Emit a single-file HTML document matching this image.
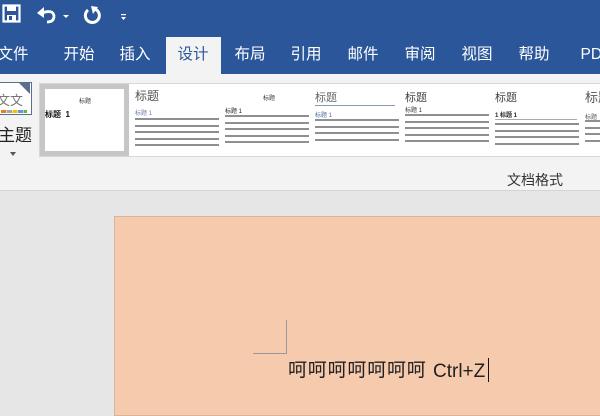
<!DOCTYPE html>
<html><head><meta charset="utf-8"><style>
*{margin:0;padding:0;box-sizing:border-box}
body{width:600px;height:400px;overflow:hidden;position:relative;background:#e6e6e6;font-family:"Liberation Sans","Noto Sans CJK SC",sans-serif}
.a{position:absolute}
.top{left:0;top:0;width:600px;height:74px;background:#2b579a}
.tab{position:absolute;top:37px;height:37px;line-height:36px;color:#fff;font-size:15.5px;text-align:center}
.rib{left:0;top:74px;width:600px;height:117px;background:#f3f3f3;border-bottom:1px solid #d4d4d4}
.gal{left:39px;top:83px;width:570px;height:74px;background:#fff;border:1px solid #d6d6d6}
.it{position:absolute;top:0;width:90px;height:72px;font-size:6px;color:#444;overflow:hidden}
.tx{position:absolute;left:0;width:84px;height:60px}
.ln{height:2px;background:#6a6a6a;margin:0 0 4.5px 0;width:84px;opacity:.75}
</style></head><body>
<div class="a top"></div>
<svg class="a" style="left:2px;top:4px" width="130" height="22" viewBox="0 0 130 22">
 <rect x="1.5" y="1.5" width="16" height="16" fill="none" stroke="#fff" stroke-width="2.2"/>
 <rect x="5" y="2" width="9" height="5" fill="#fff"/>
 <rect x="5" y="11" width="9" height="6" fill="#fff"/>
 <rect x="7" y="12" width="3" height="4" fill="#2b579a"/>
 <path d="M40 9 Q51 5 52 12 Q52 18 45 18" fill="none" stroke="#fff" stroke-width="2.8"/>
 <path d="M35 9 L42 3 L42 14 Z" fill="#fff"/>
 <path d="M61 11 l3 3 3-3z" fill="#fff"/>
 <path d="M86 6 A7 7 0 1 0 93 5" fill="none" stroke="#fff" stroke-width="3"/>
 <path d="M89 2 L96 3 L91 10 Z" fill="#fff"/>
 <rect x="119" y="10" width="5" height="1.2" fill="#fff"/>
 <path d="M119 13 l2.5 3 2.5-3z" fill="#fff"/>
</svg>
<div class="tab" style="left:166px;width:55px;background:#f3f3f3;color:#2b579a"></div>
<div class="tab" style="left:-7px;width:40px">文件</div>
<div class="tab" style="left:59px;width:40px">开始</div>
<div class="tab" style="left:115px;width:40px">插入</div>
<div class="tab" style="left:173px;width:40px;color:#2b579a">设计</div>
<div class="tab" style="left:230px;width:40px">布局</div>
<div class="tab" style="left:286px;width:40px">引用</div>
<div class="tab" style="left:343px;width:40px">邮件</div>
<div class="tab" style="left:400px;width:40px">审阅</div>
<div class="tab" style="left:457px;width:40px">视图</div>
<div class="tab" style="left:514px;width:40px">帮助</div>
<div class="tab" style="left:576px;width:40px">PDF</div>
<div class="a rib"></div>
<div class="a" style="left:-2px;top:82px;width:34px;height:33px;border:1px solid #5a6f8f;background:#fff"></div>
<div class="a" style="left:-3px;top:90px;font-size:13px;color:#777;font-family:'Noto Sans CJK SC',sans-serif;white-space:nowrap">文文</div>
<div class="a" style="left:19px;top:83px;width:0;height:0;border-left:11px solid transparent;border-top:11px solid #5a6f8f"></div>
<div class="a" style="left:1px;top:110px;width:26px;height:3px;background:linear-gradient(90deg,#d9822b 0 20%,#fff 20% 22%,#a5a5a5 22% 42%,#fff 42% 44%,#f4c000 44% 64%,#fff 64% 66%,#5b9bd5 66% 86%,#fff 86% 88%,#70ad47 88%)"></div>
<div class="a" style="left:-2px;top:121px;font-size:17px;color:#222">主题</div>
<div class="a" style="left:10px;top:152px;border-left:3.5px solid transparent;border-right:3.5px solid transparent;border-top:4px solid #555"></div>
<div class="a gal">
 <div class="it" style="left:0;width:89px;height:72px;border:5px solid #c6c6c6">
  <div class="a" style="left:34px;top:7px;font-size:6px;color:#333">标题</div>
  <div class="a" style="left:0;top:20px;font-size:8px;font-weight:bold;color:#111">标题&nbsp; 1</div>
 </div>
 <div class="it" style="left:95px">
  <div class="a" style="left:0;top:3px;font-size:12px;color:#555">标题</div>
  <div class="a" style="left:0;top:24px;font-size:6px;color:#6a7fa8">标题 1</div>
  <div class="tx" style="top:34px"><div class="ln"></div><div class="ln"></div><div class="ln"></div><div class="ln"></div><div class="ln"></div></div>
 </div>
 <div class="it" style="left:185px">
  <div class="a" style="left:38px;top:9px;font-size:6px;color:#333">标题</div>
  <div class="a" style="left:0;top:22px;font-size:6px;color:#222">标题 1</div>
  <div class="tx" style="top:31px"><div class="ln"></div><div class="ln"></div><div class="ln"></div><div class="ln"></div><div class="ln"></div></div>
 </div>
 <div class="it" style="left:275px">
  <div class="a" style="left:0;top:5px;font-size:11px;color:#666">标题</div>
  <div class="a" style="left:0;top:21px;width:80px;height:1px;background:#8898b8"></div>
  <div class="a" style="left:0;top:26px;font-size:6px;color:#4a6a9a">标题 1</div>
  <div class="tx" style="top:35px"><div class="ln"></div><div class="ln"></div><div class="ln"></div><div class="ln"></div></div>
 </div>
 <div class="it" style="left:365px">
  <div class="a" style="left:0;top:5px;font-size:11px;color:#444">标题</div>
  <div class="a" style="left:0;top:21px;font-size:6px;color:#333">标题 1</div>
  <div class="tx" style="top:30px"><div class="ln"></div><div class="ln"></div><div class="ln"></div><div class="ln"></div><div class="ln"></div></div>
 </div>
 <div class="it" style="left:455px">
  <div class="a" style="left:0;top:5px;font-size:11px;color:#444">标题</div>
  <div class="a" style="left:0;top:26px;font-size:6px;font-weight:bold;color:#222">1 标题 1</div>
  <div class="a" style="left:0;top:35px;width:82px;height:1px;background:#aaa"></div>
  <div class="tx" style="top:39px"><div class="ln"></div><div class="ln"></div><div class="ln"></div><div class="ln"></div></div>
 </div>
 <div class="it" style="left:545px">
  <div class="a" style="left:0;top:3px;font-size:13px;color:#555">标题</div>
  <div class="a" style="left:0;top:28px;font-size:6px;color:#555">标题</div>
  <div class="tx" style="top:36px"><div class="ln"></div><div class="ln"></div><div class="ln"></div><div class="ln"></div></div>
 </div>
</div>
<div class="a" style="left:507px;top:170px;font-size:14px;color:#333">文档格式</div>
<div class="a" style="left:114px;top:216px;width:500px;height:200px;background:#f6caad;border:1px solid #d9b49a"></div>
<div class="a" style="left:253px;top:353px;width:34px;height:1px;background:#999"></div>
<div class="a" style="left:286px;top:320px;width:1px;height:34px;background:#999"></div>
<div class="a" style="left:288px;top:355px;font-size:19px;color:#222;white-space:nowrap;letter-spacing:0.8px">呵呵呵呵呵呵呵</div>
<div class="a" style="left:433px;top:361px;font-size:19px;color:#222;white-space:nowrap">Ctrl+Z</div>
<div class="a" style="left:488px;top:358px;width:1px;height:24px;background:#111"></div>
</body></html>
